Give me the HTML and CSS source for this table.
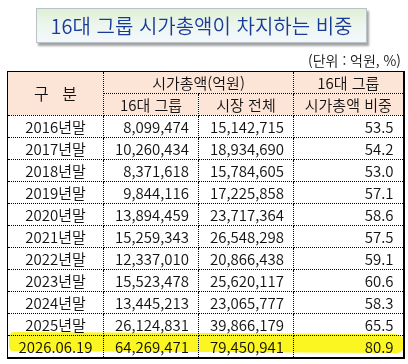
FILE: index.html
```html
<!DOCTYPE html>
<html lang="ko">
<head>
<meta charset="utf-8">
<link rel="stylesheet" href="styles.css">
</head>
<body>
<div class="page">
  <div class="title-wrap">
    <div class="title">16대 그룹 시가총액이 차지하는 비중</div>
  </div>
  <div class="unit">(단위 : 억원, %)</div>
  <table class="tbl">
    <colgroup>
      <col class="c1"><col class="c2"><col class="c3"><col class="c4">
    </colgroup>
    <thead>
      <tr>
        <th rowspan="2" class="gubun">구&nbsp;&nbsp;&nbsp;분</th>
        <th colspan="2">시가총액(억원)</th>
        <th>16대 그룹</th>
      </tr>
      <tr>
        <th>16대 그룹</th>
        <th>시장 전체</th>
        <th>시가총액 비중</th>
      </tr>
    </thead>
    <tbody>
      <tr><td>2016년말</td><td>8,099,474</td><td>15,142,715</td><td>53.5</td></tr>
      <tr><td>2017년말</td><td>10,260,434</td><td>18,934,690</td><td>54.2</td></tr>
      <tr><td>2018년말</td><td>8,371,618</td><td>15,784,605</td><td>53.0</td></tr>
      <tr><td>2019년말</td><td>9,844,116</td><td>17,225,858</td><td>57.1</td></tr>
      <tr><td>2020년말</td><td>13,894,459</td><td>23,717,364</td><td>58.6</td></tr>
      <tr><td>2021년말</td><td>15,259,343</td><td>26,548,298</td><td>57.5</td></tr>
      <tr><td>2022년말</td><td>12,337,010</td><td>20,866,438</td><td>59.1</td></tr>
      <tr><td>2023년말</td><td>15,523,478</td><td>25,620,117</td><td>60.6</td></tr>
      <tr><td>2024년말</td><td>13,445,213</td><td>23,065,777</td><td>58.3</td></tr>
      <tr><td>2025년말</td><td>26,124,831</td><td>39,866,179</td><td>65.5</td></tr>
      <tr class="hl"><td>2026.06.19</td><td>64,269,471</td><td>79,450,941</td><td>80.9</td></tr>
    </tbody>
  </table>
  <div class="marker"></div>
</div>
</body>
</html>
```
FILE: styles.css
```css
html, body {
  margin: 0;
  padding: 0;
  background: #ffffff;
}
body {
  font-family: "Noto Sans CJK KR", "Noto Sans", sans-serif;
  color: #111;
}
.page {
  position: relative;
  width: 408px;
  height: 364px;
  overflow: hidden;
}
.title-wrap {
  padding: 8px 0 0 36px;
  height: 44px;
  box-sizing: border-box;
}
.title {
  width: 331px;
  height: 35px;
  box-sizing: border-box;
  border: 1px solid #b9c2c6;
  background: linear-gradient(to bottom, #ddf0d3 0%, #edf6ee 50%, #f3f8fd 100%);
  box-shadow: 2px 3px 2px rgba(90, 90, 90, 0.55);
  color: #1a3a9a;
  font-size: 20px;
  font-weight: 350;
  line-height: 33px;
  text-align: center;
}
.unit {
  text-align: right;
  font-size: 14px;
  font-weight: 350;
  line-height: 16px;
  padding: 8px 7px 0 0;
  height: 27px;
  box-sizing: border-box;
  color: #111;
}
.tbl {
  margin-left: 7px;
  border-collapse: collapse;
  table-layout: fixed;
  width: 396px;
  border: 1px solid #000;
  border-right-width: 2px;
  border-bottom-width: 2px;
}
.c1 { width: 96px; }
.c2 { width: 95px; }
.c3 { width: 95px; }
.c4 { width: 110px; }
.tbl th, .tbl td {
  height: 21px;
  padding: 0;
  border: 1px dotted #000;
  font-size: 15px;
  line-height: 21px;
  font-weight: 350;
  white-space: nowrap;
  overflow: hidden;
}
.tbl th {
  background: #fce4d6;
  text-align: center;
}
.tbl th.gubun {
  font-size: 16px;
}
.tbl td {
  text-align: right;
  padding-right: 9px;
}
.tbl td:first-child {
  text-align: center;
  padding-right: 0;
}
.marker {
  position: absolute;
  left: 9px;
  top: 333px;
  width: 396px;
  height: 19px;
  background: #fbf50f;
  mix-blend-mode: multiply;
  border-radius: 4px 10px 8px 3px / 6px 9px 9px 6px;
  transform: rotate(0.3deg);
  opacity: 0.92;
}
```
